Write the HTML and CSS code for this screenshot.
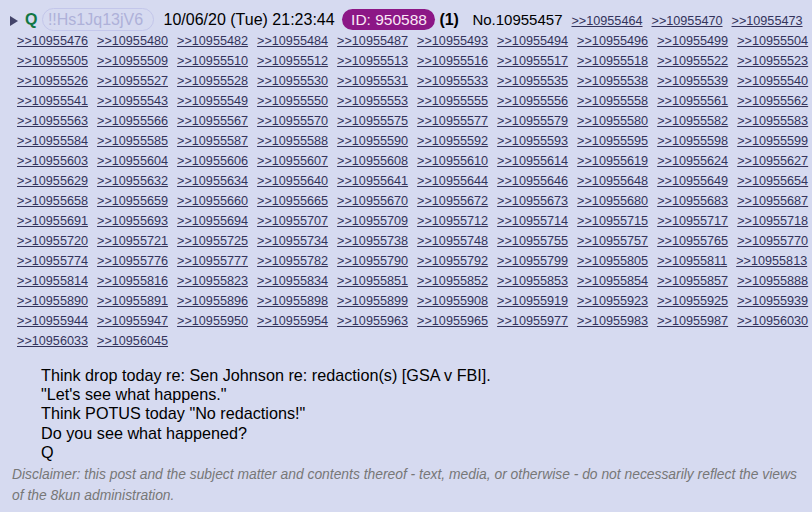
FILE: index.html
```html
<!DOCTYPE html>
<html>
<head>
<meta charset="utf-8">
<link rel="stylesheet" href="styles.css">
</head>
<body>
<div class="post">
  <div class="intro">
    <span class="head"><svg class="toggle" width="8" height="10" viewBox="0 0 8 10"><polygon points="0,0 8,5 0,10" fill="#44446a"/></svg><span class="name">Q</span> <span class="trip">!!Hs1Jq13jV6</span> <span class="date">10/06/20 (Tue) 21:23:44</span> <span class="posterid">ID: 950588</span> <span class="count">(1)</span> <span class="no">No.10955457</span></span>
    <a href="#">&gt;&gt;10955464</a>
    <a href="#">&gt;&gt;10955470</a>
    <a href="#">&gt;&gt;10955473</a>
    <a href="#">&gt;&gt;10955476</a>
    <a href="#">&gt;&gt;10955480</a>
    <a href="#">&gt;&gt;10955482</a>
    <a href="#">&gt;&gt;10955484</a>
    <a href="#">&gt;&gt;10955487</a>
    <a href="#">&gt;&gt;10955493</a>
    <a href="#">&gt;&gt;10955494</a>
    <a href="#">&gt;&gt;10955496</a>
    <a href="#">&gt;&gt;10955499</a>
    <a href="#">&gt;&gt;10955504</a>
    <a href="#">&gt;&gt;10955505</a>
    <a href="#">&gt;&gt;10955509</a>
    <a href="#">&gt;&gt;10955510</a>
    <a href="#">&gt;&gt;10955512</a>
    <a href="#">&gt;&gt;10955513</a>
    <a href="#">&gt;&gt;10955516</a>
    <a href="#">&gt;&gt;10955517</a>
    <a href="#">&gt;&gt;10955518</a>
    <a href="#">&gt;&gt;10955522</a>
    <a href="#">&gt;&gt;10955523</a>
    <a href="#">&gt;&gt;10955526</a>
    <a href="#">&gt;&gt;10955527</a>
    <a href="#">&gt;&gt;10955528</a>
    <a href="#">&gt;&gt;10955530</a>
    <a href="#">&gt;&gt;10955531</a>
    <a href="#">&gt;&gt;10955533</a>
    <a href="#">&gt;&gt;10955535</a>
    <a href="#">&gt;&gt;10955538</a>
    <a href="#">&gt;&gt;10955539</a>
    <a href="#">&gt;&gt;10955540</a>
    <a href="#">&gt;&gt;10955541</a>
    <a href="#">&gt;&gt;10955543</a>
    <a href="#">&gt;&gt;10955549</a>
    <a href="#">&gt;&gt;10955550</a>
    <a href="#">&gt;&gt;10955553</a>
    <a href="#">&gt;&gt;10955555</a>
    <a href="#">&gt;&gt;10955556</a>
    <a href="#">&gt;&gt;10955558</a>
    <a href="#">&gt;&gt;10955561</a>
    <a href="#">&gt;&gt;10955562</a>
    <a href="#">&gt;&gt;10955563</a>
    <a href="#">&gt;&gt;10955566</a>
    <a href="#">&gt;&gt;10955567</a>
    <a href="#">&gt;&gt;10955570</a>
    <a href="#">&gt;&gt;10955575</a>
    <a href="#">&gt;&gt;10955577</a>
    <a href="#">&gt;&gt;10955579</a>
    <a href="#">&gt;&gt;10955580</a>
    <a href="#">&gt;&gt;10955582</a>
    <a href="#">&gt;&gt;10955583</a>
    <a href="#">&gt;&gt;10955584</a>
    <a href="#">&gt;&gt;10955585</a>
    <a href="#">&gt;&gt;10955587</a>
    <a href="#">&gt;&gt;10955588</a>
    <a href="#">&gt;&gt;10955590</a>
    <a href="#">&gt;&gt;10955592</a>
    <a href="#">&gt;&gt;10955593</a>
    <a href="#">&gt;&gt;10955595</a>
    <a href="#">&gt;&gt;10955598</a>
    <a href="#">&gt;&gt;10955599</a>
    <a href="#">&gt;&gt;10955603</a>
    <a href="#">&gt;&gt;10955604</a>
    <a href="#">&gt;&gt;10955606</a>
    <a href="#">&gt;&gt;10955607</a>
    <a href="#">&gt;&gt;10955608</a>
    <a href="#">&gt;&gt;10955610</a>
    <a href="#">&gt;&gt;10955614</a>
    <a href="#">&gt;&gt;10955619</a>
    <a href="#">&gt;&gt;10955624</a>
    <a href="#">&gt;&gt;10955627</a>
    <a href="#">&gt;&gt;10955629</a>
    <a href="#">&gt;&gt;10955632</a>
    <a href="#">&gt;&gt;10955634</a>
    <a href="#">&gt;&gt;10955640</a>
    <a href="#">&gt;&gt;10955641</a>
    <a href="#">&gt;&gt;10955644</a>
    <a href="#">&gt;&gt;10955646</a>
    <a href="#">&gt;&gt;10955648</a>
    <a href="#">&gt;&gt;10955649</a>
    <a href="#">&gt;&gt;10955654</a>
    <a href="#">&gt;&gt;10955658</a>
    <a href="#">&gt;&gt;10955659</a>
    <a href="#">&gt;&gt;10955660</a>
    <a href="#">&gt;&gt;10955665</a>
    <a href="#">&gt;&gt;10955670</a>
    <a href="#">&gt;&gt;10955672</a>
    <a href="#">&gt;&gt;10955673</a>
    <a href="#">&gt;&gt;10955680</a>
    <a href="#">&gt;&gt;10955683</a>
    <a href="#">&gt;&gt;10955687</a>
    <a href="#">&gt;&gt;10955691</a>
    <a href="#">&gt;&gt;10955693</a>
    <a href="#">&gt;&gt;10955694</a>
    <a href="#">&gt;&gt;10955707</a>
    <a href="#">&gt;&gt;10955709</a>
    <a href="#">&gt;&gt;10955712</a>
    <a href="#">&gt;&gt;10955714</a>
    <a href="#">&gt;&gt;10955715</a>
    <a href="#">&gt;&gt;10955717</a>
    <a href="#">&gt;&gt;10955718</a>
    <a href="#">&gt;&gt;10955720</a>
    <a href="#">&gt;&gt;10955721</a>
    <a href="#">&gt;&gt;10955725</a>
    <a href="#">&gt;&gt;10955734</a>
    <a href="#">&gt;&gt;10955738</a>
    <a href="#">&gt;&gt;10955748</a>
    <a href="#">&gt;&gt;10955755</a>
    <a href="#">&gt;&gt;10955757</a>
    <a href="#">&gt;&gt;10955765</a>
    <a href="#">&gt;&gt;10955770</a>
    <a href="#">&gt;&gt;10955774</a>
    <a href="#">&gt;&gt;10955776</a>
    <a href="#">&gt;&gt;10955777</a>
    <a href="#">&gt;&gt;10955782</a>
    <a href="#">&gt;&gt;10955790</a>
    <a href="#">&gt;&gt;10955792</a>
    <a href="#">&gt;&gt;10955799</a>
    <a href="#">&gt;&gt;10955805</a>
    <a href="#">&gt;&gt;10955811</a>
    <a href="#">&gt;&gt;10955813</a>
    <a href="#">&gt;&gt;10955814</a>
    <a href="#">&gt;&gt;10955816</a>
    <a href="#">&gt;&gt;10955823</a>
    <a href="#">&gt;&gt;10955834</a>
    <a href="#">&gt;&gt;10955851</a>
    <a href="#">&gt;&gt;10955852</a>
    <a href="#">&gt;&gt;10955853</a>
    <a href="#">&gt;&gt;10955854</a>
    <a href="#">&gt;&gt;10955857</a>
    <a href="#">&gt;&gt;10955888</a>
    <a href="#">&gt;&gt;10955890</a>
    <a href="#">&gt;&gt;10955891</a>
    <a href="#">&gt;&gt;10955896</a>
    <a href="#">&gt;&gt;10955898</a>
    <a href="#">&gt;&gt;10955899</a>
    <a href="#">&gt;&gt;10955908</a>
    <a href="#">&gt;&gt;10955919</a>
    <a href="#">&gt;&gt;10955923</a>
    <a href="#">&gt;&gt;10955925</a>
    <a href="#">&gt;&gt;10955939</a>
    <a href="#">&gt;&gt;10955944</a>
    <a href="#">&gt;&gt;10955947</a>
    <a href="#">&gt;&gt;10955950</a>
    <a href="#">&gt;&gt;10955954</a>
    <a href="#">&gt;&gt;10955963</a>
    <a href="#">&gt;&gt;10955965</a>
    <a href="#">&gt;&gt;10955977</a>
    <a href="#">&gt;&gt;10955983</a>
    <a href="#">&gt;&gt;10955987</a>
    <a href="#">&gt;&gt;10956030</a>
    <a href="#">&gt;&gt;10956033</a>
    <a href="#">&gt;&gt;10956045</a>
  </div>
  <div class="body">
    <p>Think drop today re: Sen Johnson re: redaction(s) [GSA v FBI].</p>
    <p>"Let's see what happens."</p>
    <p>Think POTUS today "No redactions!"</p>
    <p>Do you see what happened?</p>
    <p>Q</p>
  </div>
  <div class="disclaimer">Disclaimer: this post and the subject matter and contents thereof - text, media, or otherwise - do not necessarily reflect the views of the 8kun administration.</div>
</div>
</body>
</html>
```
FILE: styles.css
```css
html, body {
  margin: 0;
  padding: 0;
  background: #d6daf0;
}
body {
  font-family: "Liberation Sans", Arial, sans-serif;
  color: #000;
}
.post {
  width: 812px;
  height: 512px;
  overflow: hidden;
  background: #d6daf0;
}
.intro {
  display: flex;
  flex-wrap: wrap;
  align-items: baseline;
  column-gap: 9px;
  box-sizing: border-box;
  width: 812px;
  padding: 11px 2px 0 17px;
}
.intro a {
  font-size: 12.65px;
  line-height: 20px;
  color: #34345c;
  text-decoration: underline;
}
.head {
  font-size: 16px;
  line-height: 18px;
  white-space: nowrap;
}
.toggle {
  margin-left: -7px;
  margin-right: 7px;
  vertical-align: -1px;
}
.name {
  color: #117743;
  font-weight: bold;
}
.trip {
  color: #aeb1d9;
  border: 1px solid #c3c6ea;
  border-radius: 12px;
  padding: 2px 10px 2px 5px;
}
.date {
  margin-left: 5px;
}
.posterid {
  background: #8c1786;
  color: #fbe8f6;
  border-radius: 11px;
  padding: 2px 8px 2px 9px;
  font-size: 15.5px;
  margin-left: 3px;
}
.count {
  font-weight: bold;
}
.no {
  font-size: 15px;
  margin-left: 9px;
}
.body {
  padding: 15px 0 0 41px;
  font-size: 16.2px;
  line-height: 19.2px;
}
.body p {
  margin: 0;
}
.disclaimer {
  padding: 2px 12px 0 12px;
  font-size: 13.85px;
  line-height: 21px;
  font-style: italic;
  color: #777;
}
```
